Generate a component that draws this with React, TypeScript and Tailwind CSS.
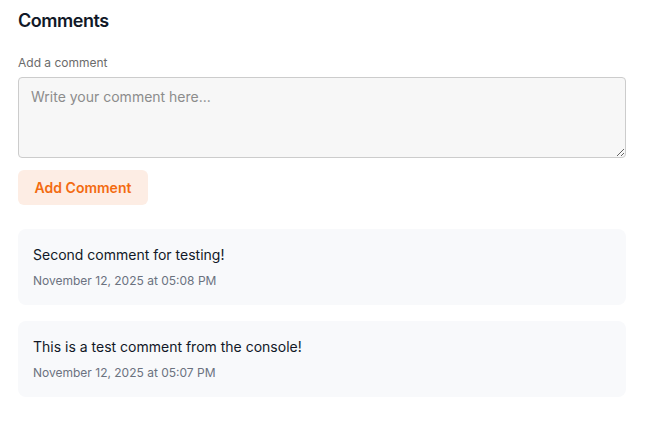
import { useState } from 'react';

interface Comment {
  id: number;
  text: string;
  date: string;
}

const comments: Comment[] = [
  { id: 2, text: 'Second comment for testing!', date: 'November 12, 2025 at 05:08 PM' },
  { id: 1, text: 'This is a test comment from the console!', date: 'November 12, 2025 at 05:07 PM' }
];

export default function App() {
  const [value, setValue] = useState('');

  return (
    <div className="min-h-screen bg-white px-[18px] pt-[7px] pr-[34px] font-['Inter','Noto_Sans',sans-serif]">
      <h2 className="text-lg leading-7 font-semibold tracking-tight text-[#111827]">Comments</h2>

      <label className="mt-5 mb-1.5 block text-xs leading-4 text-[#6b6b6b]">Add a comment</label>
      <textarea
        value={value}
        onChange={(e) => setValue(e.target.value)}
        placeholder="Write your comment here..."
        className="block h-[81px] w-full rounded border border-[#cccccc] bg-[#f7f7f7] px-3 py-[9px] text-sm leading-5 text-[#111827] placeholder:text-[#8c8c8c] outline-none"
      />

      <button
        type="button"
        className="mt-3 h-[35px] w-[130px] rounded-md bg-[#fdede4] text-sm font-semibold text-[#f36b10]"
      >
        Add Comment
      </button>

      <div className="mt-6 space-y-4">
        {comments.map((c) => (
          <div key={c.id} className="rounded-lg bg-[#f8f9fb] px-[15px] py-4">
            <p className="text-sm leading-5 text-[#111827]">{c.text}</p>
            <p className="mt-2 text-xs leading-4 text-[#6b7280]">{c.date}</p>
          </div>
        ))}
      </div>
    </div>
  );
}
